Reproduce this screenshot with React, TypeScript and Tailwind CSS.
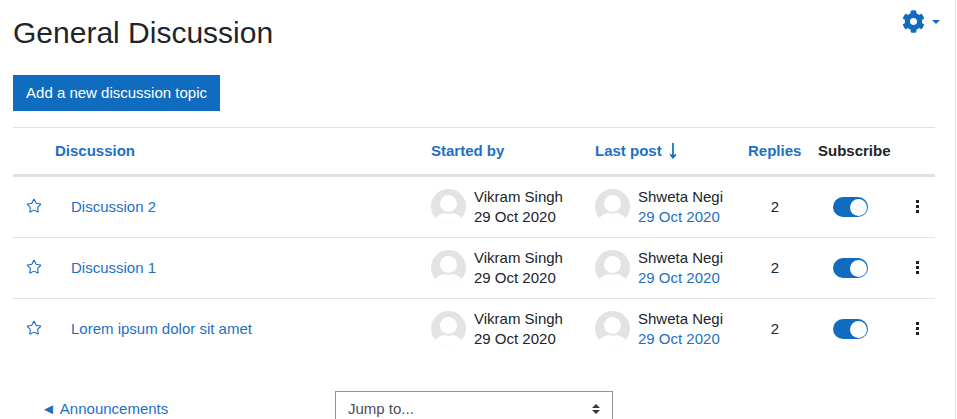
import { Star } from "lucide-react";

const rows = ["Discussion 2", "Discussion 1", "Lorem ipsum dolor sit amet"];

function Avatar() {
  return (
    <svg viewBox="0 0 35 35" className="-mt-[1px] h-[35px] w-[35px] shrink-0">
      <defs>
        <clipPath id="avatar-clip">
          <circle cx="17.5" cy="17.5" r="17.5" />
        </clipPath>
      </defs>
      <g clipPath="url(#avatar-clip)">
        <rect width="35" height="35" fill="#e3e3e3" />
        <circle cx="17.5" cy="14.5" r="8.5" fill="#fff" />
        <path d="M2 35c0-5 4-9 11-11 3 1 6 1 9 0 7 2 11 6 11 11z" fill="#fff" />
      </g>
    </svg>
  );
}

function UserCell({ name, date, linked }: { name: string; date: string; linked?: boolean }) {
  return (
    <div className="flex items-center gap-2">
      <Avatar />
      <div className="-mt-[1px] leading-[20px] whitespace-nowrap">
        <div>{name}</div>
        <div className={linked ? "text-[#1d70c4]" : ""}>{date}</div>
      </div>
    </div>
  );
}

function Toggle() {
  return (
    <div className="flex h-5 w-[35px] items-center justify-end rounded-full bg-[#0f6cbf] pr-[1px]">
      <div className="h-[17px] w-[17px] rounded-full bg-white" />
    </div>
  );
}

function Row({ title, last }: { title: string; last: boolean }) {
  return (
    <div className={`flex h-[61px] items-center border-b ${last ? "border-transparent" : "border-[#dee2e6]"}`}>
      <div className="flex w-[58px] justify-start pl-[13px]">
        <Star className="-mt-[2px] h-4 w-4 text-[#0f6cbf]" strokeWidth={1.6} />
      </div>
      <div className="w-[360px] text-[#1d70c4] whitespace-nowrap">{title}</div>
      <div className="w-[164px]">
        <UserCell name="Vikram Singh" date="29 Oct 2020" />
      </div>
      <div className="w-[153px]">
        <UserCell name="Shweta Negi" date="29 Oct 2020" linked />
      </div>
      <div className="w-[54px] text-center">2</div>
      <div className="flex w-[96px] justify-center">
        <Toggle />
      </div>
      <div className="-mt-[1px] flex w-[30px] flex-col items-center gap-[2px] pl-[9px]">
        <span className="h-[3px] w-[3px] bg-[#1d2125]" />
        <span className="h-[3px] w-[3px] bg-[#1d2125]" />
        <span className="h-[3px] w-[3px] bg-[#1d2125]" />
      </div>
    </div>
  );
}

export default function App() {
  return (
    <div className="h-[419px] w-[956px] overflow-hidden border-r border-[#dee2e6] bg-white font-['Liberation_Sans',sans-serif] text-[15px] text-[#212529]">
      <div className="w-[935px] pl-[13px]">
        <div className="flex h-[75px] items-start justify-between">
          <h2 className="mt-[14px] text-[30px] leading-[38px]">General Discussion</h2>
          <div className="-mr-[5px] mt-[10px] flex items-center gap-[7px] text-[#0f6cbf]">
            <svg viewBox="0 0 512 512" className="h-[23px] w-[23px]" fill="currentColor">
              <path d="M487.400 315.700l-42.600-24.600c4.300-23.200 4.300-47 0-70.200l42.600-24.600c4.900-2.800 7.100-8.600 5.500-14-11.100-35.600-30-67.800-54.700-94.600-3.800-4.100-10-5.100-14.800-2.300L380.800 110c-17.900-15.400-38.500-27.300-60.800-35.100V25.800c0-5.600-3.900-10.500-9.400-11.700-36.700-8.200-74.300-7.800-109.200 0-5.500 1.200-9.400 6.100-9.400 11.700V75c-22.200 7.900-42.800 19.800-60.800 35.100L88.700 85.500c-4.900-2.800-11-1.900-14.800 2.300-24.700 26.700-43.600 58.900-54.700 94.600-1.700 5.400.6 11.200 5.500 14L67.300 221c-4.300 23.200-4.300 47 0 70.200l-42.600 24.600c-4.900 2.800-7.100 8.600-5.500 14 11.100 35.600 30 67.800 54.700 94.600 3.800 4.100 10 5.100 14.800 2.300l42.600-24.600c17.900 15.400 38.500 27.300 60.800 35.100v49.200c0 5.600 3.900 10.500 9.400 11.700 36.700 8.200 74.300 7.800 109.200 0 5.500-1.200 9.400-6.100 9.400-11.700v-49.200c22.200-7.900 42.800-19.800 60.800-35.100l42.600 24.600c4.900 2.800 11 1.900 14.800-2.300 24.700-26.700 43.600-58.900 54.700-94.600 1.500-5.500-.7-11.300-5.600-14.100zM256 336c-44.100 0-80-35.900-80-80s35.900-80 80-80 80 35.900 80 80-35.900 80-80 80z" />
            </svg>
            <span className="h-0 w-0 border-x-[4px] border-t-[4px] border-x-transparent border-t-[#0f6cbf]" />
          </div>
        </div>

        <button type="button" className="h-9 w-[207px] bg-[#0f6cbf] text-center text-white">
          Add a new discussion topic
        </button>

        <div className="mt-4 w-[922px]">
          <div className="flex h-[50px] items-center border-y border-t-[#dee2e6] border-b-[3px] border-b-[#dee2e6] font-bold">
            <div className="w-[418px] pl-[42px] text-[#1d70c4]">Discussion</div>
            <div className="w-[164px] text-[#1d70c4]">Started by</div>
            <div className="flex w-[153px] items-center gap-[6px] text-[#1d70c4]">
              Last post
              <svg viewBox="0 0 10 18" className="-mt-[2px] h-[17px] w-[10px]" fill="none" stroke="#0f6cbf" strokeWidth="1.800">
                <path d="M5 1v15M2 13l3 3.500 3-3.500" />
              </svg>
            </div>
            <div className="w-[70px] text-[#1d70c4]">Replies</div>
            <div>Subscribe</div>
          </div>
          {rows.map((title, i) => (
            <Row key={title} title={title} last={i === rows.length - 1} />
          ))}
        </div>

        <div className="mt-[31px] flex items-start">
          <div className="flex w-[322px] gap-[4px] pl-[28px] pt-[7px] text-[#1d70c4]">
            <span>◄</span>
            <span>Announcements</span>
          </div>
          <div className="relative flex h-9 w-[278px] items-center border border-[#8f959e] pl-3 text-[#495057]">
            Jump to...
            <svg viewBox="0 0 8 10" className="absolute right-[12px] top-[12px] h-[10px] w-2" fill="#343a40">
              <path d="M4 0l4 4H0zM4 10L0 6h8z" />
            </svg>
          </div>
        </div>
      </div>
    </div>
  );
}
